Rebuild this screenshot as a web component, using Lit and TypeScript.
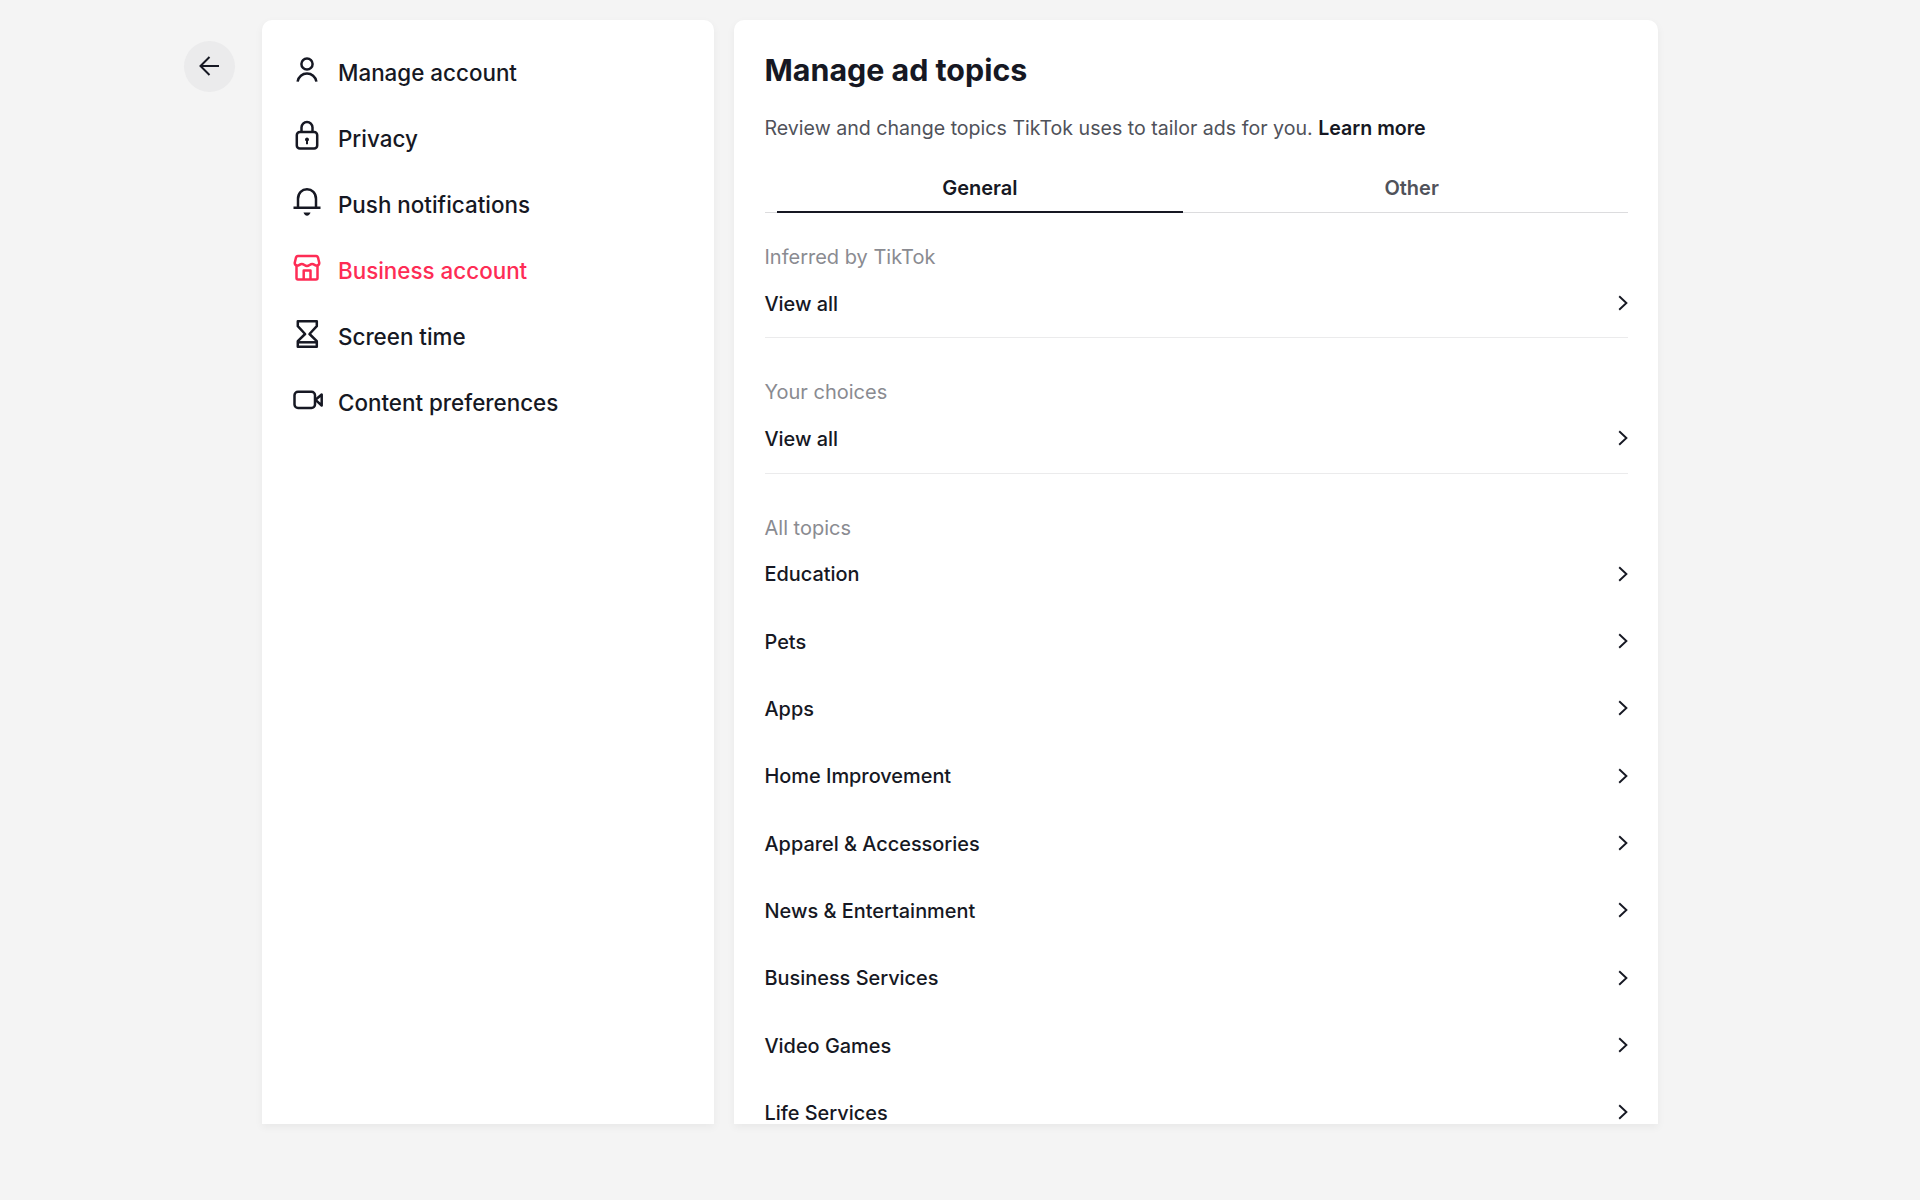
import {html, css, LitElement, svg} from 'lit';
import {customElement} from 'lit/decorators.js';

const menu = [
  {
    label: 'Manage account',
    icon: svg`<circle cx="16" cy="10" r="5.6"/><path d="M6.600 27.600C7.400 22.800 11.400 19.600 16 19.600S24.600 22.800 25.400 27.600"/>`,
  },
  {
    label: 'Privacy',
    icon: svg`<rect x="5.800" y="12" width="20.400" height="16.500" rx="3"/><path d="M10.500 12V7.500A5.500 5.500 0 0 1 21.500 7.500V12"/><path class="solid" d="M16 17.400a2.100 2.100 0 0 1 1 3.900V24.300h-2v-3a2.100 2.100 0 0 1 1-3.900Z"/>`,
  },
  {
    label: 'Push notifications',
    icon: svg`<path d="M7 21.700V13C7 7 11 3.300 16 3.300S25 7 25 13V21.700"/><path d="M2.500 21.700H29.500"/><path class="solid" d="M12.500 26.600H19.500C19 28.600 17.500 29.800 16 29.800S13 28.600 12.500 26.600Z"/>`,
  },
  {
    label: 'Business account',
    active: true,
    icon: svg`<path d="M7 4H25Q26.500 4 27 5.500L28.300 11Q28.300 13 26.200 13.500C24 14 23.500 12 21.200 12S18.300 14 16 14 13.100 12 10.800 12 8 14 5.800 13.500Q3.700 13 3.700 11L5 5.500Q5.500 4 7 4Z"/><path d="M5.500 13.500V26Q5.500 27.500 7 27.500H25Q26.500 27.500 26.500 26V13.500"/><path d="M12.700 27.500V18.500H19.500V27.500"/>`,
  },
  {
    label: 'Screen time',
    icon: svg`<path d="M6.800 3.200H25.800V8.200L18.500 16L25.800 23.200V28.800H6.800V23.200L14.100 16L6.800 8.200Z"/><path d="M7.500 24.300H25"/>`,
  },
  {
    label: 'Content preferences',
    icon: svg`<rect x="3.500" y="7.800" width="20.500" height="16.200" rx="3.500"/><path d="M24.500 15.800L30.700 10.500V21.500Z"/>`,
  },
];

const topics = [
  'Education',
  'Pets',
  'Apps',
  'Home Improvement',
  'Apparel & Accessories',
  'News & Entertainment',
  'Business Services',
  'Video Games',
  'Life Services',
];

@customElement('app-root')
export class AppRoot extends LitElement {
  static styles = css`
    :host {
      display: block;
      min-height: 1200px;
      background: #f4f4f4;
      font-family: Inter, 'Liberation Sans', sans-serif;
      color: #161823;
    }

    .page {
      display: flex;
      align-items: flex-start;
      padding: 20px 0 0 184px;
    }

    .back {
      display: flex;
      flex: none;
      width: 51px;
      height: 51px;
      margin: 20.500px 27px 0 0;
      padding: 0;
      border: none;
      border-radius: 50%;
      background: #ebebec;
      align-items: center;
      justify-content: center;
    }

    .back svg {
      width: 24px;
      height: 24px;
      fill: none;
      stroke: #161823;
      stroke-width: 2;
    }

    .card {
      height: 1104px;
      background: #fff;
      border-radius: 10px 10px 0 0;
      box-shadow: 0 3px 8px rgba(0, 0, 0, 0.05);
      overflow: hidden;
      box-sizing: border-box;
    }

    .side {
      width: 452px;
      padding: 19.500px 0 0 29px;
      margin-right: 19.500px;
    }

    .item {
      display: flex;
      height: 66px;
      align-items: center;
      gap: 15px;
      font-size: 22.400px;
      font-weight: 500;
    }

    .item svg {
      width: 32px;
      height: 32px;
      margin-bottom: 5px;
      fill: none;
      stroke: currentColor;
      stroke-width: 2.500;
      stroke-linejoin: round;
    }

    .item svg .solid {
      fill: currentColor;
      stroke: none;
    }

    .item.active {
      color: #fe2c55;
    }

    .main {
      width: 924.500px;
      padding: 32px 30px 0 31px;
    }

    h1 {
      margin: 0;
      font-size: 30.400px;
      line-height: 36px;
      font-weight: 700;
    }

    .desc {
      margin: 28px 0 21px;
      font-size: 19.600px;
      line-height: 24px;
      color: #50525a;
    }

    .desc b {
      font-weight: 600;
      color: #161823;
    }

    .tabs {
      display: flex;
      border-bottom: 1.500px solid #dcdcde;
      margin-bottom: 32.500px;
    }

    .tab {
      flex: 1;
      height: 52px;
      margin: 0 13px -1.500px 12px;
      box-sizing: border-box;
      border-bottom: 2.500px solid transparent;
      font-size: 20px;
      font-weight: 600;
      line-height: 54px;
      text-align: center;
      color: #50525a;
    }

    .tab.active {
      border-bottom-color: #161823;
      color: #161823;
    }

    .label {
      font-size: 20px;
      line-height: 25px;
      color: #8a8b91;
    }

    .row {
      display: flex;
      height: 67.350px;
      align-items: center;
      justify-content: space-between;
      font-size: 19.900px;
      font-weight: 500;
    }

    .row svg {
      width: 10px;
      height: 16px;
      margin: 0 0.500px 1.500px 0;
      fill: none;
      stroke: #161823;
      stroke-width: 1.900;
    }

    .section {
      margin-bottom: 42px;
    }

    .section .row {
      border-bottom: 1.500px solid #ebebec;
      box-sizing: content-box;
    }
  `;

  render() {
    return html`
      <div class="page">
        <button class="back">
          <svg viewBox="0 0 24 24"><path d="M21 12H2.500M11.500 3L2.500 12L11.500 21" /></svg>
        </button>
        <nav class="card side">
          ${menu.map(
            (m) => html`
              <div class="item ${m.active ? 'active' : ''}">
                <svg viewBox="0 0 32 32">${m.icon}</svg>
                <span>${m.label}</span>
              </div>
            `
          )}
        </nav>
        <main class="card main">
          <h1>Manage ad topics</h1>
          <p class="desc">
            Review and change topics TikTok uses to tailor ads for you.
            <b>Learn more</b>
          </p>
          <div class="tabs">
            <div class="tab active">General</div>
            <div class="tab">Other</div>
          </div>
          <div class="section">
            <div class="label">Inferred by TikTok</div>
            ${this.renderRow('View all')}
          </div>
          <div class="section">
            <div class="label">Your choices</div>
            ${this.renderRow('View all')}
          </div>
          <div class="label">All topics</div>
          ${topics.map((t) => this.renderRow(t))}
        </main>
      </div>
    `;
  }

  private renderRow(text: string) {
    return html`
      <div class="row">
        <span>${text}</span>
        <svg viewBox="0 0 10 16"><path d="M1.200 1.300L8.400 8L1.200 14.700" /></svg>
      </div>
    `;
  }
}
